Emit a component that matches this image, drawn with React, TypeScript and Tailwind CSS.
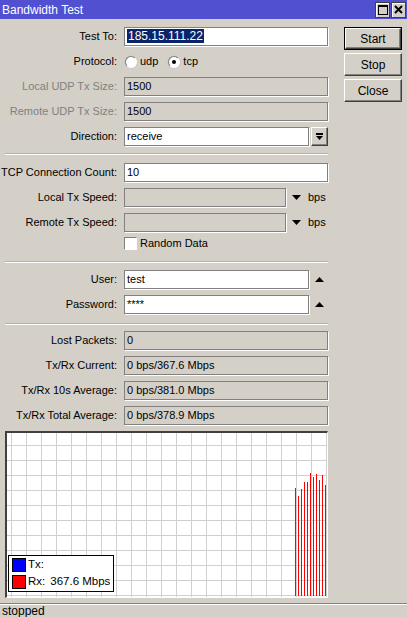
import React from "react";

const bars = [
  { x: 288, top: 55 },
  { x: 291, top: 63 },
  { x: 294, top: 56 },
  { x: 297, top: 49 },
  { x: 300, top: 49 },
  { x: 303, top: 40 },
  { x: 306, top: 44 },
  { x: 309, top: 41 },
  { x: 312, top: 47 },
  { x: 315, top: 42 },
  { x: 318, top: 52 },
];

function Row({
  label,
  disabled,
  children,
}: {
  label: string;
  disabled?: boolean;
  children: React.ReactNode;
}) {
  return (
    <div className="flex h-[19px] items-center">
      <div
        className={`w-[117px] shrink-0 text-right ${disabled ? "text-[#808080]" : "text-black"}`}
      >
        {label}
      </div>
      <div className="ml-[7px] flex flex-1 items-center">{children}</div>
    </div>
  );
}

function Field({
  value,
  disabled,
  className = "flex-1",
}: {
  value?: React.ReactNode;
  disabled?: boolean;
  className?: string;
}) {
  return (
    <div
      className={`h-[19px] whitespace-nowrap border border-[#808080] px-[2px] leading-[17px] text-black shadow-[1px_1px_0_#fff] ${disabled ? "bg-[#d4d0c8]" : "bg-white"} ${className}`}
    >
      {value}
    </div>
  );
}

function Separator() {
  return <div className="ml-[5px] h-[2px] border-t border-[#b4b0a8] border-b border-b-white" />;
}

function Radio({ checked, label }: { checked?: boolean; label: string }) {
  return (
    <div className="flex items-center">
      <div className="flex h-[12px] w-[12px] items-center justify-center rounded-full border border-t-[#808080] border-l-[#808080] border-b-white border-r-white bg-white shadow-[0_0_0_0.5px_#c0c0c0]">
        {checked && <div className="h-[4px] w-[4px] rounded-full bg-black" />}
      </div>
      <span className="ml-[3px]">{label}</span>
    </div>
  );
}

function Triangle({ up }: { up?: boolean }) {
  return (
    <svg width="9" height="5" viewBox="0 0 9 5">
      {up ? <polygon points="0,5 9,5 4.5,0" fill="#000" /> : <polygon points="0,0 9,0 4.5,5" fill="#000" />}
    </svg>
  );
}

function Button({ label, primary }: { label: string; primary?: boolean }) {
  return (
    <div className={`h-[23px] w-[58px] ${primary ? "border border-black" : ""}`}>
      <div className="flex h-full w-full items-center justify-center border border-t-white border-l-white border-b-[#404040] border-r-[#404040] text-[12px] shadow-[inset_-1px_-1px_0_#808080]">
        {label}
      </div>
    </div>
  );
}

export default function App() {
  return (
    <div className="flex h-[617px] w-[407px] flex-col overflow-hidden bg-[#d4d0c8] text-[11px] text-black [font-family:'Liberation_Sans',Arial,sans-serif]">
      <div className="flex h-[19px] shrink-0 items-center bg-[#5050d0] pl-[2px] pr-[1px]">
        <span className="flex-1 text-[12px] text-white">Bandwidth Test</span>
        <div className="flex h-[16px] w-[15px] items-center justify-center border border-[#404040] bg-[#d4d0c8] shadow-[inset_1px_1px_0_#fff]">
          <div className="h-[10px] w-[10px] border border-black border-t-2" />
        </div>
        <div className="ml-[1px] flex h-[16px] w-[15px] items-center justify-center border border-[#404040] bg-[#d4d0c8] shadow-[inset_1px_1px_0_#fff]">
          <svg width="9" height="9" viewBox="0 0 9 9">
            <path d="M1 1 L8 8 M8 1 L1 8" stroke="#000" strokeWidth="2" />
          </svg>
        </div>
      </div>

      <div className="flex flex-1">
        <div className="flex w-[328px] shrink-0 flex-col pt-[8px]">
          <div className="flex flex-col gap-[6px]">
            <Row label="Test To:">
              <Field
                value={<span className="bg-[#0a246a] px-[1px] text-[12px] text-white">185.15.111.22</span>}
              />
            </Row>
            <Row label="Protocol:">
              <div className="flex items-center gap-[10px] pl-[1px]">
                <Radio label="udp" />
                <Radio label="tcp" checked />
              </div>
            </Row>
            <Row label="Local UDP Tx Size:" disabled>
              <Field value="1500" disabled />
            </Row>
            <Row label="Remote UDP Tx Size:" disabled>
              <Field value="1500" disabled />
            </Row>
            <Row label="Direction:">
              <Field value="receive" />
              <div className="ml-[2px] flex h-[19px] w-[17px] items-center justify-center border border-t-white border-l-white border-b-[#404040] border-r-[#404040] shadow-[inset_-1px_-1px_0_#808080]">
                <svg width="7" height="8" viewBox="0 0 7 8">
                  <rect x="0" y="0" width="7" height="2" fill="#000" />
                  <polygon points="0,3 7,3 3.5,7" fill="#000" />
                </svg>
              </div>
            </Row>
          </div>

          <div className="mt-[7px]">
            <Separator />
          </div>

          <div className="mt-[8px] flex flex-col gap-[6px]">
            <Row label="TCP Connection Count:">
              <Field value="10" />
            </Row>
            <Row label="Local Tx Speed:">
              <Field disabled className="w-[162px]" />
              <div className="ml-[6px]">
                <Triangle />
              </div>
              <span className="ml-[7px]">bps</span>
            </Row>
            <Row label="Remote Tx Speed:">
              <Field disabled className="w-[162px]" />
              <div className="ml-[6px]">
                <Triangle />
              </div>
              <span className="ml-[7px]">bps</span>
            </Row>
          </div>

          <div className="mt-[5px] flex h-[13px] items-center pl-[124px]">
            <div className="h-[13px] w-[13px] border border-t-[#808080] border-l-[#808080] border-b-white border-r-white bg-white" />
            <span className="ml-[3px]">Random Data</span>
          </div>

          <div className="mt-[11px]">
            <Separator />
          </div>

          <div className="mt-[7px] flex flex-col gap-[6px]">
            <Row label="User:">
              <Field value="test" className="w-[185px]" />
              <div className="ml-[6px]">
                <Triangle up />
              </div>
            </Row>
            <Row label="Password:">
              <Field value="****" className="w-[185px]" />
              <div className="ml-[6px]">
                <Triangle up />
              </div>
            </Row>
          </div>

          <div className="mt-[9px]">
            <Separator />
          </div>

          <div className="mt-[6px] flex flex-col gap-[6px]">
            <Row label="Lost Packets:">
              <Field value="0" disabled />
            </Row>
            <Row label="Tx/Rx Current:">
              <Field value="0 bps/367.6 Mbps" disabled />
            </Row>
            <Row label="Tx/Rx 10s Average:">
              <Field value="0 bps/381.0 Mbps" disabled />
            </Row>
            <Row label="Tx/Rx Total Average:">
              <Field value="0 bps/378.9 Mbps" disabled />
            </Row>
          </div>

          <div className="relative ml-[5px] mt-[6px] h-[167px] w-[323px] border-l-2 border-t-2 border-l-[#404040] border-t-[#404040] border-r border-b border-r-white border-b-white bg-white">
            <svg width="320" height="164" viewBox="0 0 320 164" className="block">
              {Array.from({ length: 22 }, (_, i) => (
                <line key={`v${i}`} x1={4.5 + i * 15} y1="0" x2={4.5 + i * 15} y2="164" stroke="#d0d0d0" />
              ))}
              {Array.from({ length: 11 }, (_, i) => (
                <line key={`h${i}`} x1="0" y1={12.5 + i * 15} x2="320" y2={12.5 + i * 15} stroke="#d0d0d0" />
              ))}
              {bars.map((b) => (
                <line key={b.x} x1={b.x + 0.5} y1={b.top} x2={b.x + 0.5} y2="163" stroke="#ff0000" />
              ))}
            </svg>
            <div className="absolute left-[1px] top-[122px] flex h-[37px] w-[106px] flex-col justify-center gap-[3px] whitespace-nowrap border border-black bg-white pl-[3px] text-[11.5px]">
              <div className="flex h-[14px] items-center">
                <div className="h-[14px] w-[14px] shrink-0 border border-black bg-[#0000ff]" />
                <span className="ml-[2px]">Tx:</span>
              </div>
              <div className="flex h-[14px] items-center">
                <div className="h-[14px] w-[14px] shrink-0 border border-black bg-[#ff0000]" />
                <span className="ml-[2px]">Rx:</span>
                <span className="ml-[5px]">367.6 Mbps</span>
              </div>
            </div>
          </div>
        </div>

        <div className="ml-[16px] flex flex-col gap-[3px] pt-[8px]">
          <Button label="Start" primary />
          <Button label="Stop" />
          <Button label="Close" />
        </div>
      </div>

      <div className="h-[14px] shrink-0 border-t border-[#808080] shadow-[inset_0_1px_0_#fff]">
        <div className="ml-[2px] text-[12px] leading-[14px]">stopped</div>
      </div>
    </div>
  );
}
